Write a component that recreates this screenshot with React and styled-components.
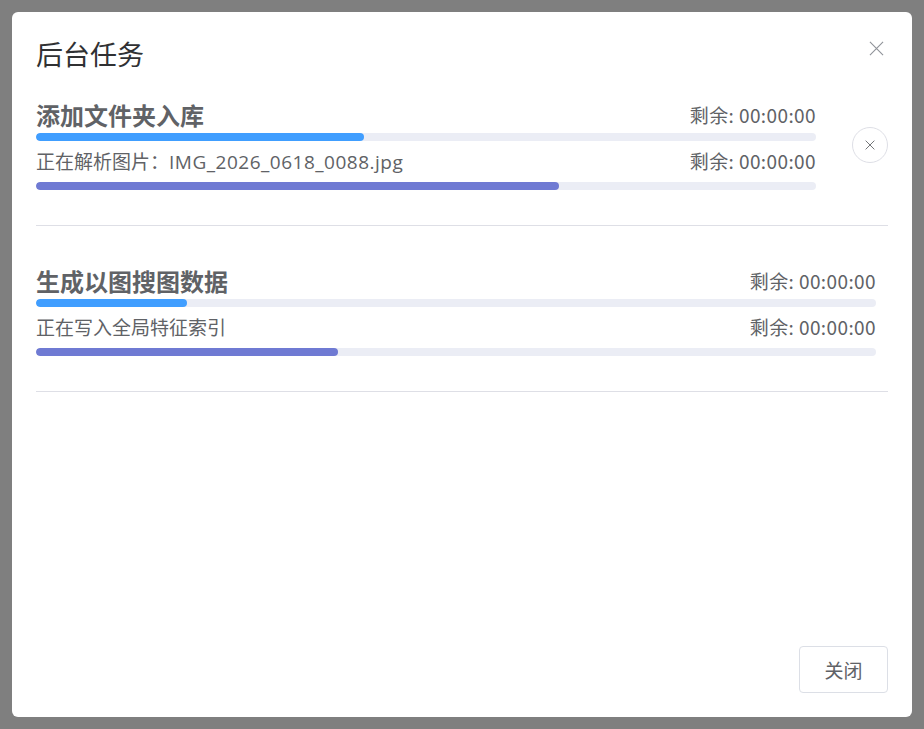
import React from "react";
import styled, { createGlobalStyle } from "styled-components";

const Global = createGlobalStyle`
  html, body { margin: 0; padding: 0; }
  body {
    background: #7f7f7f;
    font-family: "Open Sans", "Noto Sans CJK SC", sans-serif;
  }
  * { box-sizing: border-box; }
`;

const Overlay = styled.div`
  width: 924px;
  height: 729px;
  padding: 12px;
  background: #7f7f7f;
`;

const Dialog = styled.div`
  width: 900px;
  height: 705px;
  background: #fff;
  border-radius: 6px;
  padding: 24px;
  display: flex;
  flex-direction: column;
  position: relative;
`;

const Header = styled.div`
  display: flex;
  align-items: center;
  justify-content: space-between;
  height: 36px;
`;

const Title = styled.h2`
  margin: 0;
  font-family: "Noto Sans CJK SC", sans-serif;
  font-weight: 400;
  font-size: 27px;
  line-height: 36px;
  color: #303133;
`;

const CloseIcon = styled.button`
  position: absolute;
  top: 24px;
  right: 24px;
  width: 24px;
  height: 24px;
  border: none;
  background: none;
  padding: 0;
  display: flex;
  align-items: center;
  justify-content: center;
  color: #909399;
  cursor: pointer;
`;

const Body = styled.div`
  flex: 1;
  display: flex;
  flex-direction: column;
`;

const Task = styled.div`
  display: flex;
  align-items: center;
  padding: ${(p) => (p.$first ? "28px" : "40px")} 0 35px;
  border-bottom: 1px solid #dedfe6;
`;

const TaskContent = styled.div`
  flex: 1;
  min-width: 0;
  margin-right: ${(p) => (p.$hasCancel ? "36px" : "12px")};
`;

const Row = styled.div`
  display: flex;
  align-items: center;
  justify-content: space-between;
  height: ${(p) => (p.$main ? "32px" : "28px")};
  padding-bottom: ${(p) => (p.$main ? "4px" : "1px")};
  margin-top: ${(p) => (p.$main ? "0" : "6px")};
  font-family: "Noto Sans CJK SC", sans-serif;
  color: #606266;
`;

const TaskName = styled.span`
  font-size: 24px;
  font-weight: 700;
  color: #606266;
`;

const SubName = styled.span`
  font-size: 19px;
  color: #606266;
  font-family: "Noto Sans CJK SC", sans-serif;
`;

const Latin = styled.span`
  font-family: "Open Sans", "Noto Sans CJK SC", sans-serif;
  letter-spacing: 0.5px;
`;

const Remain = styled.span`
  font-size: 19px;
  color: #606266;
  white-space: nowrap;
  letter-spacing: 0.4px;
`;

const Track = styled.div`
  height: 8px;
  border-radius: 4px;
  background: #ebedf5;
  overflow: hidden;
  margin-top: ${(p) => (p.$main ? "1px" : "7px")};
`;

const Fill = styled.div`
  height: 100%;
  border-radius: 4px;
  background: ${(p) => (p.$main ? "#409eff" : "#6f7ad3")};
`;

const CancelButton = styled.button`
  width: 36px;
  height: 36px;
  border-radius: 50%;
  border: 1px solid #dedfe6;
  background: #fff;
  display: flex;
  align-items: center;
  justify-content: center;
  padding: 0;
  color: #606266;
  flex-shrink: 0;
  cursor: pointer;
`;

const Footer = styled.div`
  display: flex;
  justify-content: flex-end;
`;

const Button = styled.button`
  width: 89px;
  height: 47px;
  border: 1px solid #dcdfe6;
  border-radius: 4px;
  background: #fff;
  color: #606266;
  font-size: 19px;
  font-family: "Noto Sans CJK SC", sans-serif;
  cursor: pointer;
`;

const XIcon = ({ size, stroke = 1.3 }) => (
  <svg width={size} height={size} viewBox="0 0 16 16" fill="none">
    <path d="M1 1L15 15M15 1L1 15" stroke="currentColor" strokeWidth={stroke} />
  </svg>
);

const tasks = [
  {
    name: "添加文件夹入库",
    sub: (
      <>
        正在解析图片：<Latin>IMG_2026_0618_0088.jpg</Latin>
      </>
    ),
    main: 42,
    subP: 67,
    cancel: true,
  },
  {
    name: "生成以图搜图数据",
    sub: "正在写入全局特征索引",
    main: 18,
    subP: 36,
    cancel: false,
  },
];

export default function App() {
  return (
    <>
      <Global />
      <Overlay>
        <Dialog>
          <Header>
            <Title>后台任务</Title>
          </Header>
          <CloseIcon aria-label="关闭">
            <XIcon size={15} stroke={1.2} />
          </CloseIcon>
          <Body>
            {tasks.map((t, i) => (
              <Task key={i} $first={i === 0}>
                <TaskContent $hasCancel={t.cancel}>
                  <Row $main>
                    <TaskName>{t.name}</TaskName>
                    <Remain>剩余: 00:00:00</Remain>
                  </Row>
                  <Track $main>
                    <Fill $main style={{ width: `${t.main}%` }} />
                  </Track>
                  <Row>
                    <SubName>{t.sub}</SubName>
                    <Remain>剩余: 00:00:00</Remain>
                  </Row>
                  <Track>
                    <Fill style={{ width: `${t.subP}%` }} />
                  </Track>
                </TaskContent>
                {t.cancel && (
                  <CancelButton aria-label="取消">
                    <XIcon size={10} stroke={1.4} />
                  </CancelButton>
                )}
              </Task>
            ))}
          </Body>
          <Footer>
            <Button>关闭</Button>
          </Footer>
        </Dialog>
      </Overlay>
    </>
  );
}
